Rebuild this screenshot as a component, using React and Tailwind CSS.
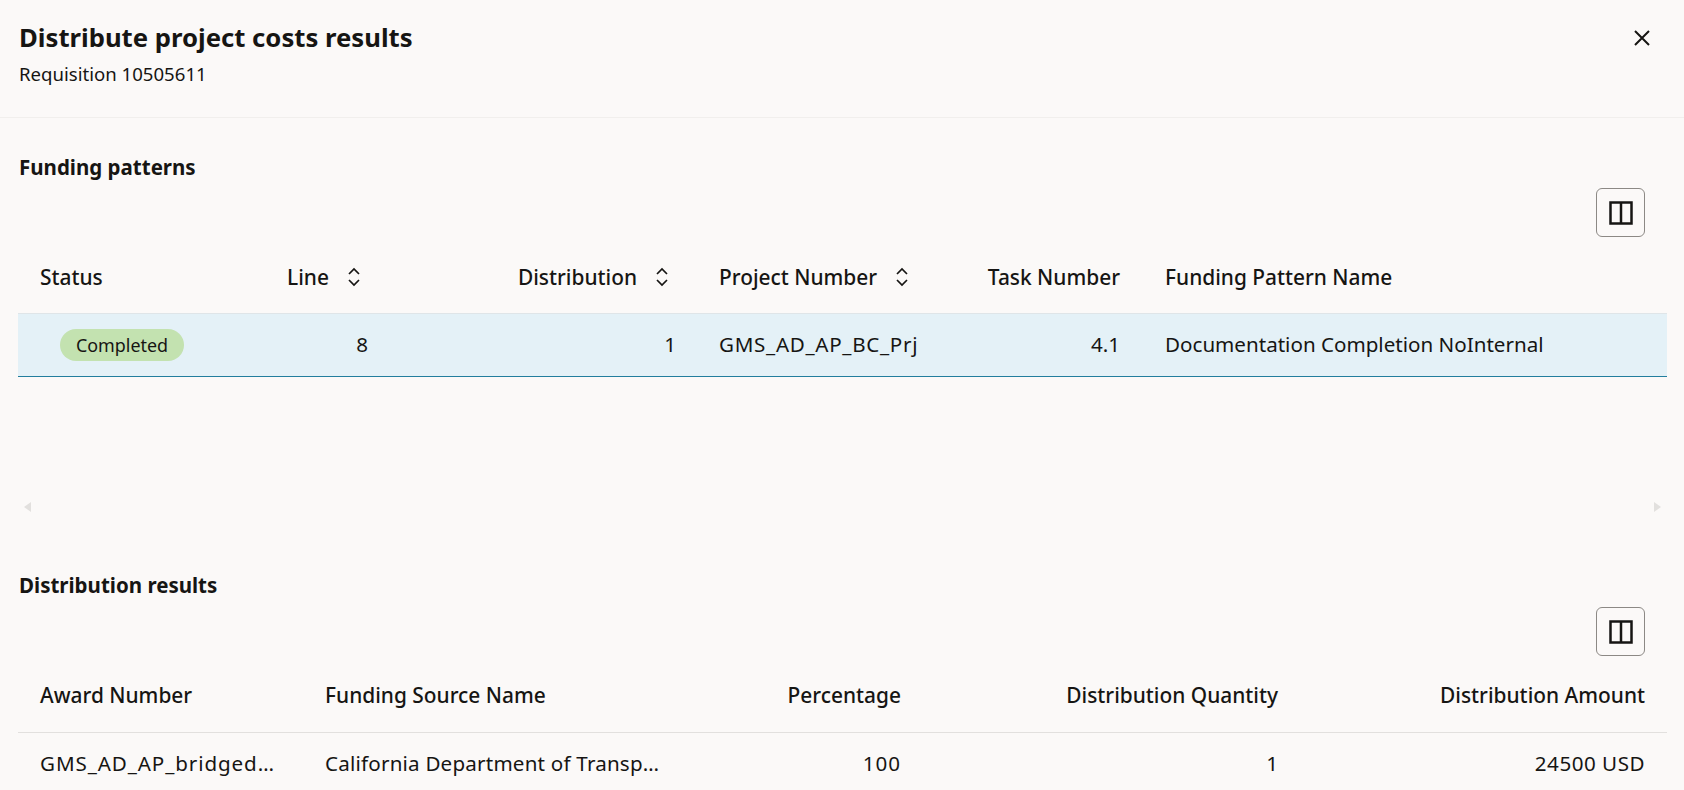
import React from 'react';

function ColumnsButton() {
  return (
    <button className="w-[49px] h-[49px] rounded-md border border-[#8c8985] flex items-center justify-center">
      <svg width="24" height="24" viewBox="0 0 24 24" fill="none" stroke="#161513" strokeWidth="2.5">
        <rect x="1.5" y="1.5" width="21" height="21" />
        <path d="M12 1.5v21" />
      </svg>
    </button>
  );
}

function Sort() {
  return (
    <svg width="14" height="20" viewBox="0 0 14 20" fill="none" stroke="#161513" strokeWidth="1.7" className="ml-[18px] shrink-0">
      <path d="M2 7l5-5 5 5" />
      <path d="M2 13l5 5 5-5" />
    </svg>
  );
}

const topCols = 'grid grid-cols-[247px_124px_308px_242px_203px_1fr]';
const bottomCols = 'grid grid-cols-[285px_379px_241px_377px_1fr]';

export default function App() {
  return (
    <div className="h-[790px] overflow-hidden bg-[#fbf9f8] text-[#161513] font-['Noto_Sans',sans-serif] text-[20.6px]">
      <div className="h-[118px] border-b border-[#f1efed] pl-[19px] pr-[33px] pt-[19px] flex justify-between">
        <div>
          <h1 className="text-[25.7px] leading-[38px] font-bold">Distribute project costs results</h1>
          <p className="text-[18.6px] leading-[22px] mt-[6px]">Requisition 10505611</p>
        </div>
        <svg width="18" height="18" viewBox="0 0 18 18" fill="none" stroke="#161513" strokeWidth="2" className="mt-[10px]">
          <path d="M2 2l14 14M16 2L2 16" />
        </svg>
      </div>

      <div className="pl-[18px] pr-[17px]">
        <h2 className="text-[20.5px] leading-[28px] font-bold mt-[35px] ml-[1px]">Funding patterns</h2>
        <div className="flex justify-end pr-[22px] mt-[7px]">
          <ColumnsButton />
        </div>

        <div className={`${topCols} h-[77px] pt-[5px] items-center font-medium text-[20.9px] border-b border-[#dfe5e8]`}>
          <div className="px-[22px]">Status</div>
          <div className="px-[22px] flex items-center"><span>Line</span><Sort /></div>
          <div className="pl-[22px] pr-[28px] flex items-center justify-end"><span>Distribution</span><Sort /></div>
          <div className="px-[22px] flex items-center"><span>Project Number</span><Sort /></div>
          <div className="px-[22px] text-right">Task Number</div>
          <div className="pl-[23px] pr-[22px]">Funding Pattern Name</div>
        </div>
        <div className={`${topCols} h-[63px] items-center bg-[#e4f1f7] border-b border-[#227e9e]`}>
          <div className="pl-[42px]">
            <span className="inline-flex items-center justify-center w-[124px] h-[32px] rounded-full bg-[#c3e2b0] text-[17.9px]">Completed</span>
          </div>
          <div className="pl-[22px] pr-[21px] pb-[2px] text-right">8</div>
          <div className="pl-[22px] pr-[21px] pb-[2px] text-right">1</div>
          <div className="px-[22px] pb-[2px] tracking-[0.7px]">GMS_AD_AP_BC_Prj</div>
          <div className="px-[22px] pb-[2px] text-right">4.1</div>
          <div className="pl-[23px] pr-[22px] pb-[2px]">Documentation Completion NoInternal</div>
        </div>

        <div className="flex justify-between mt-[123px] px-[6px] h-[14px] items-center">
          <svg width="7" height="10" viewBox="0 0 7 10" fill="#e2e0de"><path d="M7 0v10L0 5z" /></svg>
          <svg width="7" height="10" viewBox="0 0 7 10" fill="#e2e0de"><path d="M0 0v10l7-5z" /></svg>
        </div>

        <h2 className="text-[20.5px] leading-[28px] font-bold mt-[57px] ml-[1px]">Distribution results</h2>
        <div className="flex justify-end pr-[22px] mt-[8px]">
          <ColumnsButton />
        </div>

        <div className={`${bottomCols} h-[77px] pt-[3px] items-center font-medium text-[20.9px] border-b border-[#e2e0de]`}>
          <div className="px-[22px]">Award Number</div>
          <div className="px-[22px]">Funding Source Name</div>
          <div className="px-[22px] text-right">Percentage</div>
          <div className="px-[22px] text-right">Distribution Quantity</div>
          <div className="px-[22px] text-right">Distribution Amount</div>
        </div>
        <div className={`${bottomCols} h-[61px] items-center`}>
          <div className="pl-[22px] pr-[26px] truncate tracking-[0.9px]">GMS_AD_AP_bridged_award</div>
          <div className="pl-[22px] pr-[18px] truncate tracking-[0.2px]">California Department of Transportation</div>
          <div className="px-[22px] text-right tracking-[1px]">100</div>
          <div className="px-[22px] text-right">1</div>
          <div className="px-[22px] text-right tracking-[0.5px]">24500 USD</div>
        </div>
      </div>
    </div>
  );
}
